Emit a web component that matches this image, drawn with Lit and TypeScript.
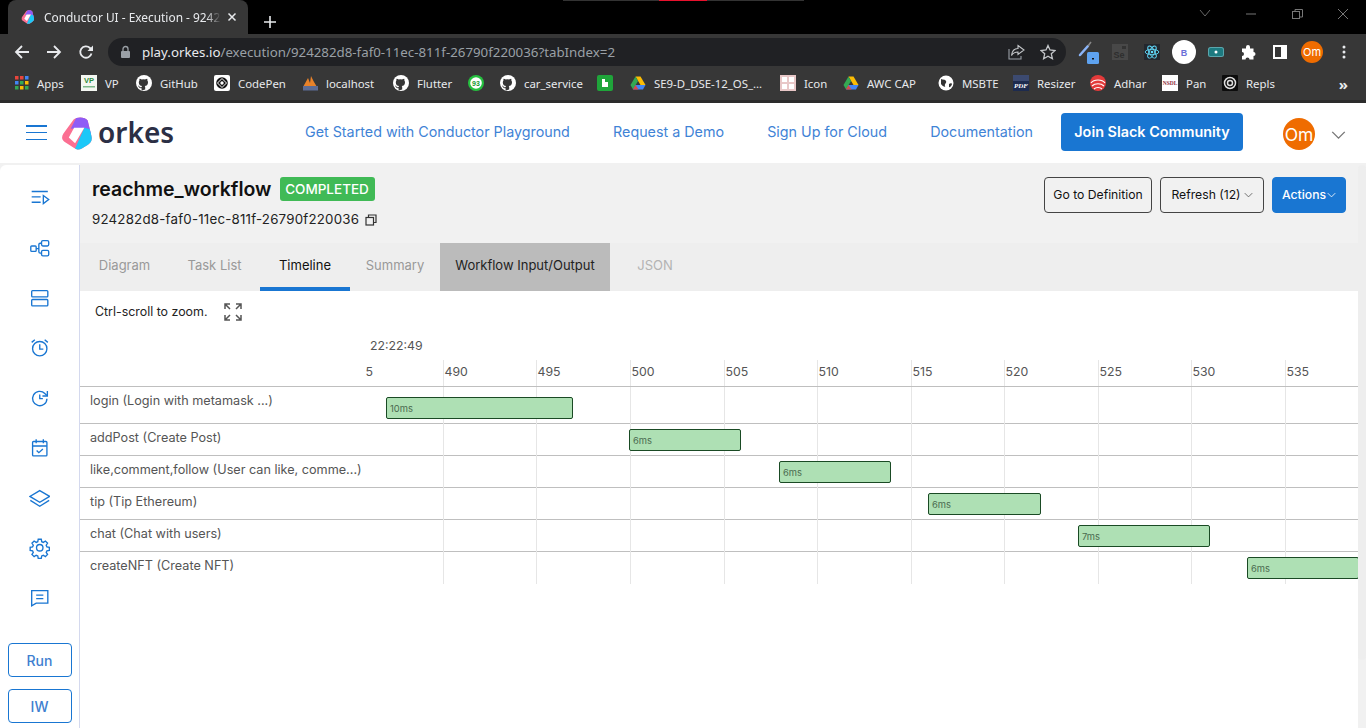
import { LitElement, html, css, svg } from "lit";
import { customElement } from "lit/decorators.js";

const gh = svg`<svg viewBox="0 0 16 16" width="16" height="16"><circle cx="8" cy="8" r="8" fill="#fff"/><path fill="#373737" d="M5.6 15.4v-2.2c-2 .4-2.5-.9-2.5-.9-.4-.9-.8-1.100-.8-1.100-.7-.5 0-.5 0-.5.7 0 1.100.7 1.100.7.700 1.100 1.700.8 2.200.6 0-.5.300-.8.500-1-1.700-.2-3.300-.9-3.300-3.500 0-.8.300-1.400.700-1.900-.1-.2-.3-.9.100-1.900 0 0 .6-.2 2 .7a7 7 0 0 1 3.600 0c1.400-.9 2-.7 2-.7.400 1 .2 1.700.1 1.900.500.5.700 1.100.700 1.900 0 2.600-1.600 3.300-3.300 3.500.3.200.5.700.5 1.300v2.100z"/></svg>`;
const drive = svg`<svg viewBox="0 0 16 16" width="16" height="16"><path fill="#fbbc04" d="M5.500 1.500h5l5 8.500h-5z"/><path fill="#34a853" d="M5.500 1.500 0.500 10l2.500 4.500L8 6z"/><path fill="#4285f4" d="M3 14.500h10l2.500-4.500h-10z"/><path fill="#ea4335" d="M3 14.500h5.500l-3-4.500z" opacity=".9"/></svg>`;

interface Bm { w: number; t: string; i: unknown }
const bookmarks: Bm[] = [
  { w: 66, t: "Apps", i: svg`<svg viewBox="0 0 14 14" width="14" height="14"><g fill="#e8453c"><rect width="3.500" height="3.500"/><rect x="5" width="3.500" height="3.500"/></g><rect x="10" width="3.500" height="3.500" fill="#4285f4"/><rect y="5" width="3.500" height="3.500" fill="#4285f4"/><rect x="5" y="5" width="3.500" height="3.500" fill="#34a853"/><rect x="10" y="5" width="3.500" height="3.500" fill="#fbbc04"/><rect y="10" width="3.500" height="3.500" fill="#34a853"/><rect x="5" y="10" width="3.500" height="3.500" fill="#fbbc04"/><rect x="10" y="10" width="3.500" height="3.500" fill="#34a853"/></svg>` },
  { w: 55, t: "VP", i: svg`<svg viewBox="0 0 16 16" width="16" height="16"><rect width="16" height="16" fill="#f4f7f2"/><text x="8" y="8" font-size="7.500" font-weight="700" text-anchor="middle" fill="#2e8b3a" font-family="Liberation Sans">VP</text><rect x="2" y="11" width="12" height="1.500" fill="#7cb98a"/></svg>` },
  { w: 78, t: "GitHub", i: gh },
  { w: 88, t: "CodePen", i: svg`<svg viewBox="0 0 16 16" width="16" height="16"><rect width="16" height="16" rx="2" fill="#fff"/><circle cx="8" cy="8" r="5.800" fill="#111"/><path d="M8 3.500 12.500 8 8 12.500 3.500 8z" fill="none" stroke="#fff"/><circle cx="8" cy="8" r="1.700" fill="#fff"/></svg>` },
  { w: 91, t: "localhost", i: svg`<svg viewBox="0 0 16 16" width="16" height="16"><path d="M1 12 6 3l2 5 1-7 3 6 3 5z" fill="#e8822a"/><rect x="1" y="11" width="15" height="4.500" fill="#5d6c95"/></svg>` },
  { w: 75, t: "Flutter", i: gh },
  { w: 32, t: "", i: svg`<svg viewBox="0 0 16 16" width="16" height="16"><circle cx="8" cy="8" r="8" fill="#25c03f"/><circle cx="8" cy="8" r="5.800" fill="#fff"/><text x="8" y="10.500" font-size="7" font-weight="700" text-anchor="middle" fill="#159a2b" font-family="Liberation Sans">93</text></svg>` },
  { w: 97, t: "car_service", i: gh },
  { w: 33, t: "", i: svg`<svg viewBox="0 0 16 16" width="16" height="16"><rect width="16" height="16" rx="2" fill="#1fa53a"/><path d="M5 4h3v3h3v5H5z" fill="#fff"/></svg>` },
  { w: 150, t: "SE9-D_DSE-12_OS_...", i: drive },
  { w: 63, t: "Icon", i: svg`<svg viewBox="0 0 16 16" width="16" height="16"><rect width="16" height="16" fill="#e8c7c7"/><g fill="#fff"><rect x="2" y="2" width="5" height="5"/><rect x="9" y="2" width="5" height="5"/><rect x="2" y="9" width="5" height="5"/><rect x="9" y="9" width="5" height="5"/></g></svg>` },
  { w: 95, t: "AWC CAP", i: drive },
  { w: 75, t: "MSBTE", i: svg`<svg viewBox="0 0 16 16" width="16" height="16"><circle cx="8" cy="8" r="7.500" fill="#fff"/><path d="M3 4c2 1 4 0 5 2s-2 3-1 5-3 0-4-2zM11 9c1-1 3-1 3 0s-2 4-3 3z" fill="#333"/></svg>` },
  { w: 77, t: "Resizer", i: svg`<svg viewBox="0 0 16 16" width="16" height="16"><rect width="16" height="16" fill="#1d2b4f"/><rect y="0" width="16" height="6" fill="#3c4a70"/><text x="8" y="13" font-size="7" font-style="italic" font-weight="700" text-anchor="middle" fill="#fff" font-family="Liberation Serif">PDF</text></svg>` },
  { w: 72, t: "Adhar", i: svg`<svg viewBox="0 0 16 16" width="16" height="16"><circle cx="8" cy="8" r="8" fill="#e33a3a"/><g fill="none" stroke="#fff" stroke-width="1.200"><path d="M1 8c3-4 11-4 14 0"/><path d="M2 11c3-3 9-3 12 0"/><path d="M4 14c2-2 6-2 8 0"/></g></svg>` },
  { w: 60, t: "Pan", i: svg`<svg viewBox="0 0 16 16" width="16" height="16"><rect width="16" height="16" fill="#fff"/><text x="8" y="10" font-size="5.500" font-weight="700" text-anchor="middle" fill="#8e2b3b" font-family="Liberation Serif">NSDL</text></svg>` },
  { w: 70, t: "Repls", i: svg`<svg viewBox="0 0 16 16" width="16" height="16"><rect width="16" height="16" rx="1" fill="#0c0c0c"/><circle cx="8" cy="8" r="5.500" fill="none" stroke="#ddd" stroke-width="1.500"/><circle cx="8" cy="8" r="2.500" fill="none" stroke="#ddd" stroke-width="1.500"/></svg>` },
];

const side = [
  svg`<path d="M3 5h18M3 11h10M3 17h10"/><path d="M16 9.500v9l6-4.500z"/>`,
  svg`<rect x="2" y="10" width="6" height="6" rx="1"/><rect x="14" y="4" width="8" height="6" rx="1.500"/><rect x="14" y="15" width="8" height="6" rx="1.500"/><path d="M8 13h3M14 7h-1.500a1.500 1.500 0 0 0-1.500 1.500v8a1.500 1.500 0 0 0 1.500 1.500H14"/>`,
  svg`<rect x="3" y="4" width="18" height="7" rx="1"/><rect x="3" y="14" width="18" height="7" rx="1"/>`,
  svg`<circle cx="12" cy="13" r="8"/><path d="M12 8v5.500h4M3 6l3.500-3M21 6l-3.500-3"/>`,
  svg`<path d="M20 13a8 8 0 1 1-2.300-5.700L20 9.500"/><path d="M20.500 4.500v5.500H15"/><path d="M12 8.500V13h3.500"/>`,
  svg`<rect x="4" y="5" width="16" height="16" rx="1"/><path d="M4 10h16M8 2.500V7M16 2.500V7M8.500 15l2.500 2.500 4.500-4"/>`,
  svg`<path d="M12 4 23 10.500 12 17 1 10.500z"/><path d="M1.500 15 12 21.500 22.500 15"/>`,
  svg`<circle cx="12" cy="12" r="3.600"/><path d="M10.300 2.500h3.400l.5 2.700 1.800.8 2.300-1.500 2.400 2.400-1.500 2.300.8 1.800 2.700.5v3.400l-2.700.5-.8 1.800 1.500 2.300-2.400 2.400-2.300-1.500-1.800.8-.5 2.700h-3.400l-.5-2.700-1.800-.8-2.300 1.500-2.400-2.400 1.500-2.300-.8-1.800-2.700-.5v-3.400l2.700-.5.8-1.800-1.500-2.300 2.400-2.400 2.300 1.500 1.800-.8z"/>`,
  svg`<path d="M3 4h18v14H8l-5 3z"/><path d="M8 9h8M8 13h8"/>`,
];

const ticks = [
  { x: 443, t: "490" }, { x: 536, t: "495" }, { x: 630, t: "500" }, { x: 724, t: "505" }, { x: 817, t: "510" },
  { x: 911, t: "515" }, { x: 1004, t: "520" }, { x: 1098, t: "525" }, { x: 1191, t: "530" }, { x: 1285, t: "535" },
];
const rows = [
  { l: "login (Login with metamask ...)", x: 386, w: 187, t: "10ms", first: true },
  { l: "addPost (Create Post)", x: 629, w: 112, t: "6ms" },
  { l: "like,comment,follow (User can like, comme...)", x: 779, w: 112, t: "6ms" },
  { l: "tip (Tip Ethereum)", x: 928, w: 113, t: "6ms" },
  { l: "chat (Chat with users)", x: 1078, w: 132, t: "7ms" },
  { l: "createNFT (Create NFT)", x: 1247, w: 112, t: "6ms" },
];
const tabs = [
  { t: "Diagram", w: 89 }, { t: "Task List", w: 91 }, { t: "Timeline", w: 90, c: "active" }, { t: "Summary", w: 90 },
  { t: "Workflow Input/Output", w: 170, c: "hl" }, { t: "JSON", w: 90, c: "light" },
];
const chev = (s: number, c: string) => html`<svg class="chev" viewBox="0 0 12 8" width=${s} height=${s * 8 / 12}><path d="M1 1.500 6 6.500l5-5" fill="none" stroke=${c} stroke-width="1.100"/></svg>`;

@customElement("app-root")
export class AppRoot extends LitElement {
  static styles = css`
    :host { display: block; width: 1366px; height: 728px; overflow: hidden; position: relative; background: #fff; font-family: Inter, "Liberation Sans", sans-serif; }
    * { box-sizing: border-box; }
    .tabbar { height: 34px; background: #000; display: flex; align-items: flex-end; padding-left: 8px; position: relative; }
    .stripe { position: absolute; left: 563px; top: 0; width: 241px; height: 1px; background: #333; }
    .stripe i { position: absolute; left: 96px; width: 48px; height: 1px; background: #e8112d; }
    .tab { width: 240px; height: 34px; background: #373737; border-radius: 8px 8px 0 0; display: flex; align-items: center; padding-left: 13px; color: #e8eaed; font: 11.900px "Noto Sans", sans-serif; }
    .tab span { margin-left: 9px; width: 177px; white-space: nowrap; -webkit-mask-image: linear-gradient(90deg, #000 92%, transparent); mask-image: linear-gradient(90deg, #000 92%, transparent); }
    .tab svg.x { margin-left: 6px; }
    .plus { margin: 0 0 6px 16px; }
    .winctl { margin-left: auto; display: flex; align-self: flex-start; height: 28px; align-items: center; padding-right: 15px; gap: 30px; }
    .toolbar { height: 32px; background: #373737; display: flex; align-items: flex-end; padding-left: 14px; }
    .nav-ico { width: 32px; height: 28px; display: flex; align-items: center; }
    .pill { width: 958px; margin-left: -2px; height: 28px; border-radius: 14px; background: #202124; display: flex; align-items: center; padding-left: 12px; font: 13.300px "Noto Sans", sans-serif; color: #9aa0a6; }
    .pill b { font-weight: 400; color: #e8eaed; }
    .pill .u { margin-left: 10px; }
    .pill .end { margin-left: auto; display: flex; gap: 15px; padding-right: 10px; align-items: center; }
    .ext { display: flex; align-items: center; margin-left: 6px; height: 28px; }
    .ext > div { width: 32px; display: flex; justify-content: center; align-items: center; flex: none; }
    .bm { height: 34px; background: #373737; display: flex; align-items: center; padding-left: 15px; color: #e8eaed; font: 11.400px "Noto Sans", sans-serif; position: relative; }
    .bm-i { display: flex; align-items: center; gap: 8px; white-space: nowrap; flex: none; }
    .bm-i svg { flex: none; }
    .more { position: absolute; right: 18px; top: 8px; font-size: 15px; font-weight: 700; }
    .sep { height: 3px; background: #2c2c2c; }
    .nav { height: 60px; display: flex; align-items: center; padding-left: 26px; background: #fff; }
    .burger { width: 21px; height: 15px; display: flex; flex-direction: column; justify-content: space-between; margin-top: -1px; }
    .burger i { height: 1.500px; background: #1976d2; display: block; }
    .logo { margin-left: 15px; display: flex; align-items: center; gap: 5px; width: 243px; }
    .logo span { font: 600 28px "Noto Sans", sans-serif; color: #2b2f45; line-height: 32px; margin-top: -3px; }
    .links { display: flex; justify-content: space-between; width: 728px; font-size: 14.300px; color: #3f83d6; margin-top: -3px; }
    .links span { white-space: nowrap; }
    .slack { margin-left: 28px; width: 182px; height: 38px; background: #1976d2; color: #fff; border-radius: 4px; font-weight: 600; font-size: 14.400px; display: flex; align-items: center; justify-content: center; margin-top: -2px; padding-bottom: 2px; }
    .avatar { margin-left: 40px; width: 32px; height: 32px; border-radius: 50%; background: #ef6c00; color: #fff; display: flex; align-items: center; justify-content: center; font-size: 17.500px; margin-top: 2px; }
    .nav .caret { margin-left: 16px; margin-top: 2px; }
    .main { display: flex; height: 565px; background: #f1f1f1; }
    .side { width: 80px; margin-top: 2px; background: #fff; border-right: 1px solid #d4d9ee; border-radius: 6px 0 0 0; display: flex; flex-direction: column; align-items: center; padding-top: 8px; }
    .side .ic { width: 24px; height: 50px; display: flex; align-items: center; justify-content: center; flex: none; }
    .side svg { fill: none; stroke: #1976d2; stroke-width: 1.500; width: 21.500px; height: 21.500px; }
    .sbtn { width: 64px; height: 34px; border: 1px solid #1976d2; border-radius: 4px; color: #3f7fd0; font-size: 14px; font-weight: 500; display: flex; align-items: center; justify-content: center; flex: none; }
    .sbtn.run { margin-top: 20px; }
    .sbtn.iw { margin-top: 12px; }
    .content { flex: 1; min-width: 0; display: flex; flex-direction: column; }
    .head { height: 80px; padding: 14px 20px 0 12px; display: flex; justify-content: space-between; }
    .title { display: flex; align-items: center; gap: 8px; height: 24px; }
    .title h1 { margin: 0; font-size: 19.500px; font-weight: 600; color: #111; }
    .badge { background: #40ba56; color: #fff; border-radius: 3px; height: 24px; width: 95px; display: flex; align-items: center; justify-content: center; font-size: 13.500px; font-weight: 500; }
    .id { margin-top: 10px; display: flex; align-items: center; gap: 6px; font-size: 13.300px; color: #222; letter-spacing: .21px; }
    .id svg { margin-top: 1px; }
    .actions { display: flex; gap: 8px; }
    .btn { height: 36px; border: 1px solid #444; border-radius: 4px; display: flex; align-items: center; justify-content: center; font-size: 12.200px; color: #111; gap: 3px; padding-bottom: 1px; }
    .btn.def { width: 108px; } .btn.ref { width: 104px; }
    .btn.act { width: 74px; background: #1976d2; color: #fff; border-color: #1976d2; font-weight: 500; gap: 1px; }
    .tabs { height: 48px; background: #eee; display: flex; font-size: 13px; font-weight: 400; color: #999; }
    .tb { display: flex; align-items: center; justify-content: center; flex: none; height: 48px; padding-bottom: 4px; }
    .tb.active { color: #111; border-bottom: 4px solid #1976d2; padding-bottom: 0; }
    .tb.hl { background: #bbb; color: #222; }
    .tb.light { color: #b3b3b3; }
    .panel { flex: 1; background: #fff; position: relative; margin-right: 8px; }
    .hint { height: 41px; padding-left: 15px; display: flex; align-items: center; gap: 16px; font-size: 12.400px; color: #222; }
    .date { height: 28px; padding: 0 0 2px 290px; display: flex; align-items: center; font-size: 12.300px; color: #555; }
    .timeline { position: relative; }
    .axis { height: 27px; border-bottom: 1px solid #bfbfbf; position: relative; }
    .tk { position: absolute; top: 0; font-size: 12.300px; color: #555; padding-left: 1.500px; line-height: 24px; }
    .row { height: 32px; border-bottom: 1px solid #bfbfbf; padding: 6px 0 0 10px; font-size: 12.650px; color: #555; line-height: 16px; white-space: nowrap; }
    .row.first { height: 37px; }
    .row.last { border-bottom: none; }
    .grid { position: absolute; top: 0; bottom: 0; width: 1px; background: #e6e6e6; }
    .bar { position: absolute; height: 22px; background: #aee0b4; border: 1px solid #1a4a24; border-radius: 2px; font-size: 9.400px; color: #4a6a4f; display: flex; align-items: center; padding-left: 3px; }
    .scroll { position: absolute; right: 0; top: 165px; width: 8px; height: 495px; background: #eee; border-radius: 4px; }
  `;

  render() {
    return html`
      <div class="tabbar">
        <div class="stripe"><i></i></div>
        <div class="tab">
          <svg width="14" height="14" viewBox="0 0 32 34">${this.logoMark("lg1")}</svg>
          <span>Conductor UI - Execution - 92428</span>
          <svg class="x" width="10" height="10" viewBox="0 0 10 10"><path d="M1.500 1.500l7 7M8.500 1.500l-7 7" stroke="#e8eaed" stroke-width="1.500"/></svg>
        </div>
        <svg class="plus" width="12" height="12" viewBox="0 0 12 12"><path d="M6 0v12M0 6h12" stroke="#e8eaed" stroke-width="1.600"/></svg>
        <div class="winctl">
          <svg width="16" height="10" viewBox="0 0 16 10"><path d="M3 1l5 6 5-6" fill="none" stroke="#666"/></svg>
          <svg width="16" height="10" viewBox="0 0 16 10"><path d="M3 5h10" stroke="#777"/></svg>
          <svg width="16" height="10" viewBox="0 0 16 10"><rect x="3.500" y="2.500" width="7" height="7" fill="none" stroke="#777"/><path d="M6 2V.5h7.500V8H11" fill="none" stroke="#777"/></svg>
          <svg width="16" height="12" viewBox="0 0 16 12"><path d="M3 1l10 10M13 1 3 11" stroke="#777"/></svg>
        </div>
      </div>
      <div class="toolbar">
        <div class="nav-ico"><svg width="16" height="16" viewBox="0 0 16 16"><path d="M15 8H2M8 2 2 8l6 6" fill="none" stroke="#e8eaed" stroke-width="1.800"/></svg></div>
        <div class="nav-ico"><svg width="16" height="16" viewBox="0 0 16 16"><path d="M1 8h13M8 2l6 6-6 6" fill="none" stroke="#e8eaed" stroke-width="1.800"/></svg></div>
        <div class="nav-ico"><svg width="16" height="16" viewBox="0 0 16 16"><path d="M13.500 9.500A5.700 5.700 0 1 1 12 4L14 6" fill="none" stroke="#e8eaed" stroke-width="1.800"/><path d="M15 1.500V7H9.500z" fill="#e8eaed"/></svg></div>
        <div class="pill">
          <svg width="12" height="14" viewBox="0 0 12 14"><rect x="1" y="6" width="9" height="7" rx="1" fill="#9aa0a6"/><path d="M3 6V4a2.500 2.500 0 0 1 5 0v2" fill="none" stroke="#9aa0a6" stroke-width="1.300"/></svg>
          <span class="u"><b>play.orkes.io</b>/execution/924282d8-faf0-11ec-811f-26790f220036?tabIndex=2</span>
          <span class="end">
            <svg width="17" height="16" viewBox="0 0 17 16"><path d="M1 5v10h12v-3" fill="none" stroke="#9aa0a6" stroke-width="1.100"/><path d="M10 1.500l6 4.500-6 4.500V8c-3 0-5 1-6.500 3.500C4 7 6.500 4.500 10 4.500z" fill="none" stroke="#c4c7ca" stroke-width="1.100"/></svg>
            <svg width="16" height="16" viewBox="0 0 16 16"><path d="M8 1.500l2 4.500 5 .5-3.700 3.300 1.100 4.900L8 12.200 3.600 14.700l1.100-4.900L1 6.500 6 6z" fill="none" stroke="#c4c7ca" stroke-width="1.300"/></svg>
          </span>
        </div>
        <div class="ext">
          <div><svg width="22" height="24" viewBox="0 0 22 24"><path d="M3 15 11 6" stroke="#8ab4f8" stroke-width="2.500" stroke-linecap="round"/><path d="M11 6l3-4" stroke="#888" stroke-width="1.500"/><rect x="10" y="12" width="12" height="12" rx="1.500" fill="#5ea2ef"/><rect x="15" y="18" width="2" height="1.500" fill="#111"/></svg></div>
          <div><svg width="16" height="16" viewBox="0 0 16 16"><rect width="16" height="16" fill="#484848"/><rect x="10" y="2" width="4" height="3" fill="#333"/><text x="7" y="14" font-size="9" font-weight="700" text-anchor="middle" fill="#2e2e2e" font-family="Liberation Sans">Se</text></svg></div>
          <div><svg width="16" height="16" viewBox="0 0 16 16"><rect width="16" height="16" fill="#23272e"/><g fill="none" stroke="#61dafb" stroke-width=".9"><ellipse cx="8" cy="8" rx="6.800" ry="2.700"/><ellipse cx="8" cy="8" rx="6.800" ry="2.700" transform="rotate(60 8 8)"/><ellipse cx="8" cy="8" rx="6.800" ry="2.700" transform="rotate(120 8 8)"/></g><circle cx="8" cy="8" r="1.300" fill="#61dafb"/></svg></div>
          <div><svg width="24" height="24" viewBox="0 0 24 24"><circle cx="12" cy="12" r="12" fill="#fff"/><text x="12" y="15.500" font-size="9" font-weight="700" text-anchor="middle" fill="#6a6fd8" font-family="Liberation Sans">B</text></svg></div>
          <div><svg width="16" height="10" viewBox="0 0 16 10"><rect width="16" height="10" rx="2.500" fill="#5aa6ad"/><rect x="1" y="1" width="14" height="8" rx="1.500" fill="#1d7a80"/><circle cx="8" cy="5" r="1.500" fill="#fff"/></svg></div>
          <div><svg width="15" height="15" viewBox="0 0 15 15"><path fill="#fff" d="M5 2a2 2 0 0 1 4 0v1.500h3.500V7a2 2 0 0 1 0 4v3.500H8.500a2 2 0 0 0-4 0H1V11a2 2 0 0 0 0-4V3.500h4z"/></svg></div>
          <div><svg width="14" height="14" viewBox="0 0 14 14"><rect width="14" height="14" fill="#fff"/><rect x="2" y="2" width="6" height="10" fill="#373737"/></svg></div>
          <div><svg width="22" height="22" viewBox="0 0 22 22"><circle cx="11" cy="11" r="11" fill="#ef6c00"/><text x="11" y="15" font-size="11" text-anchor="middle" fill="#fff" font-family="Inter">Om</text></svg></div>
          <div><svg width="4" height="14" viewBox="0 0 4 14"><g fill="#e8eaed"><circle cx="2" cy="2" r="1.500"/><circle cx="2" cy="7" r="1.500"/><circle cx="2" cy="12" r="1.500"/></g></svg></div>
        </div>
      </div>
      <div class="bm">
        ${bookmarks.map((b) => html`<div class="bm-i" style="width:${b.w}px">${b.i}${b.t ? html`<span>${b.t}</span>` : ""}</div>`)}
        <span class="more">»</span>
      </div>
      <div class="sep"></div>
      <div class="nav">
        <div class="burger"><i></i><i></i><i></i></div>
        <div class="logo">
          <svg width="31" height="33" viewBox="0 0 32 34">${this.logoMark("lg2")}</svg>
          <span>orkes</span>
        </div>
        <div class="links">
          <span>Get Started with Conductor Playground</span>
          <span>Request a Demo</span>
          <span>Sign Up for Cloud</span>
          <span>Documentation</span>
        </div>
        <div class="slack">Join Slack Community</div>
        <div class="avatar">Om</div>
        <div class="caret">${chev(15, "#777")}</div>
      </div>
      <div class="main">
        <div class="side">
          ${side.map((p) => html`<div class="ic"><svg viewBox="0 0 24 24">${p}</svg></div>`)}
          <div class="sbtn run">Run</div>
          <div class="sbtn iw">IW</div>
        </div>
        <div class="content">
          <div class="head">
            <div>
              <div class="title"><h1>reachme_workflow</h1><span class="badge">COMPLETED</span></div>
              <div class="id">924282d8-faf0-11ec-811f-26790f220036
                <svg width="12" height="12" viewBox="0 0 12 12"><rect x="1" y="3.500" width="7.500" height="7.500" fill="none" stroke="#333" stroke-width="1.200"/><path d="M3.500 3.500V1H11v7.500H8.500" fill="none" stroke="#333" stroke-width="1.200"/></svg>
              </div>
            </div>
            <div class="actions">
              <div class="btn def">Go to Definition</div>
              <div class="btn ref">Refresh (12)${chev(9, "#555")}</div>
              <div class="btn act">Actions${chev(9, "#fff")}</div>
            </div>
          </div>
          <div class="tabs">
            ${tabs.map((t) => html`<div class="tb ${t.c ?? ""}" style="width:${t.w}px">${t.t}</div>`)}
          </div>
          <div class="panel">
            <div class="hint">Ctrl-scroll to zoom.
              <svg width="20" height="20" viewBox="0 0 20 20"><g fill="none" stroke="#555" stroke-width="1.500"><path d="M2 7V2h5M2 2l5 5"/><path d="M18 7V2h-5M18 2l-5 5"/><path d="M2 13v5h5M2 18l5-5"/><path d="M18 13v5h-5M18 18l-5-5"/></g></svg>
            </div>
            <div class="date">22:22:49</div>
            <div class="timeline">
              ${ticks.map((t) => html`<div class="grid" style="left:${t.x - 80}px"></div>`)}
              <div class="axis">
                <span class="tk" style="left:284px">5</span>
                ${ticks.map((t) => html`<span class="tk" style="left:${t.x - 80}px">${t.t}</span>`)}
              </div>
              ${rows.map((r, i) => html`<div class="row ${r.first ? "first" : ""} ${i === rows.length - 1 ? "last" : ""}">${r.l}</div>`)}
              ${rows.map((r, i) => html`<div class="bar" style="left:${r.x - 80}px;width:${r.w}px;top:${i === 0 ? 37 : 37 + 32 * i}px">${r.t}</div>`)}
            </div>
          </div>
        </div>
      </div>
      <div class="scroll"></div>
    `;
  }

  logoMark(id: string) {
    return svg`
      <defs><clipPath id=${id}><path d="M12 2.500C15 -.5 24 -.5 26.500 3.500L30.500 20C31.500 25 29 27 26 29L20.500 32.500C17.500 34.500 14.500 33.500 12.500 32L2.500 25.500C-.5 23.500 -.5 20 1.500 17z"/></clipPath></defs>
      <g clip-path="url(#${id})">
        <rect x="-2" y="-2" width="36" height="38" fill="#fb6f92"/>
        <path d="M9 12 16 -2H34V22L23 11z" fill="#8f5cf6"/>
        <path d="M23 11 34 14V36H12z" fill="#1cc8f8"/>
        <path d="M12.500 11H23L13.500 27 7 21z" fill="#fff"/>
      </g>`;
  }
}
